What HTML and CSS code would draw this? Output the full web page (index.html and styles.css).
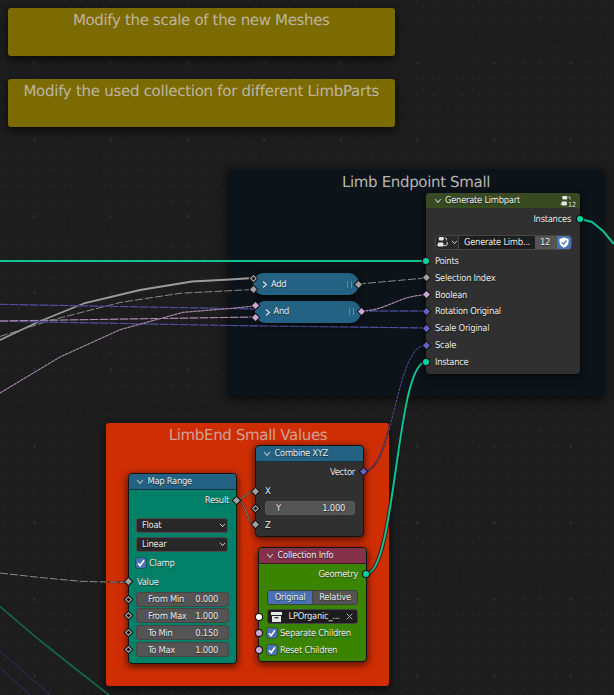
FILE: index.html
```html
<!DOCTYPE html>
<html lang="en">
<head>
<meta charset="utf-8">
<title>Geometry Nodes</title>
<link rel="stylesheet" href="styles.css">
</head>
<body>
<svg class="defs" width="0" height="0" aria-hidden="true">
  <defs>
    <symbol id="chev" viewBox="0 0 8 6"><path d="M1 1l3 3.4L7 1" fill="none" stroke="currentColor" stroke-width="1.1"/></symbol>
    <symbol id="check" viewBox="0 0 10 10"><path d="M2 5.2l2.1 2.4L8 2.3" fill="none" stroke="#fff" stroke-width="1.6"/></symbol>
    <symbol id="tree" viewBox="0 0 12 12">
      <rect x="1.8" y="1" width="5" height="3.4" rx=".8" fill="#e6e6e6"/>
      <rect x="1" y="6.6" width="5.4" height="4" rx=".8" fill="#e6e6e6"/>
      <path d="M0 9.2h1M8 1.8q1.6 0 1.6 1.6v1M6.4 9.6h2q1.8 0 1.8-1.8V6" fill="none" stroke="#e6e6e6"/>
    </symbol>
    <symbol id="tree-top" viewBox="0 0 12 12">
      <rect x="1.8" y="1" width="5" height="3.4" rx=".8" fill="#e6e6e6"/>
      <rect x="1" y="6.6" width="5.4" height="4" rx=".8" fill="#e6e6e6"/>
      <path d="M0 9.2h1M8 1.8q1.6 0 1.6 1.6v1" fill="none" stroke="#e6e6e6"/>
    </symbol>
  </defs>
</svg>
<main class="canvas">
  <section class="frame note-a"><h2>Modify the scale of the new Meshes</h2></section>
  <section class="frame note-b"><h2>Modify the used collection for different LimbParts</h2></section>
  <section class="frame endpoint"><h2>Limb Endpoint Small</h2></section>
  <section class="frame values"><h2>LimbEnd Small Values</h2></section>

  <svg class="links" width="614" height="695" viewBox="0 0 614 695" fill="none">
    <path class="violet-dim" d="M0 651L50 695M0 668L30 695"/>
    <path class="geo-dim" d="M0 606.5L38 639L72 666L109 695"/>
    <path class="geo" d="M0 261H426"/>
    <path class="geo" d="M580 219L592 222L603 231L614 244"/>
    <path class="grey-wide" d="M0 340L38 322L85 303L140 290L192 281.5L230 279.5L253 278"/>
    <path class="grey dash thin" d="M0 336.5L50 320.5L120 302.5L180 293.3L230 290.7L253 289.5"/>
    <path class="violet-under" d="M0 304.3L255 309L361 311H426M0 321.2L230 325.5L426 328"/>
    <path class="violet dash" d="M0 304.3L255 309L361 311H426M0 321.2L230 325.5L426 328"/>
    <path class="pink-under" d="M0 321L255 317"/>
    <path class="pink dash" d="M0 321L255 317"/>
    <path class="pink-under" d="M0 393L60 357L120 329.7L183 312.3L230 308.5L255 306"/>
    <path class="pink dots" d="M0 393L60 357L120 329.7L183 312.3L230 308.5L255 306"/>
    <path class="grey dash thin" d="M358 284L426 278"/>
    <path class="pink-under" d="M361 311C387 311 399 295 426 295"/>
    <path class="pink dots" d="M361 311C387 311 399 295 426 295"/>
    <path class="shade" d="M106 582L128 582.5M237 500C244 499 248 491 256 491M237 500C246 501 247 525 256 525"/>
    <path class="grey dash thin" d="M0 573L40 577.5L80 581.3L128 582.5"/>
    <path class="grey" d="M237 500C244 499 248 491 256 491M237 500C246 501 247 525 256 525"/>
    <path class="shade" d="M363 472C394 472 395 345 426 345"/>
    <path class="violet dots" d="M363 472C394 472 395 345 426 345"/>
    <path class="shade-wide" d="M366 574C396 574 396 362 426 362"/>
    <path class="geo" d="M366 574C396 574 396 362 426 362"/>
  </svg>

  <article class="node generate">
    <header><svg class="chev"><use href="#chev"/></svg><span>Generate Limbpart</span>
      <div class="users"><svg width="13" height="12"><use href="#tree-top"/></svg><small>12</small></div></header>
    <div class="row out"><span>Instances</span><i class="sock right geo-s"></i></div>
    <div class="picker">
      <div class="pick-icon"><svg width="12" height="12"><use href="#tree"/></svg><svg class="mini"><use href="#chev"/></svg></div>
      <div class="pick-name"><span>Generate Limb...</span></div>
      <div class="pick-count"><span>12</span></div>
      <div class="pick-shield"><svg width="10" height="11" viewBox="0 0 10 11"><path d="M5 .4L9.6 2v3Q9.2 9 5 10.8Q.8 9 .4 5V2z" fill="#fff"/><path d="M2.7 5.3l1.8 1.9L7.5 3.5" fill="none" stroke="#4772b3" stroke-width="1.2"/></svg></div>
    </div>
    <div class="row"><i class="sock geo-s"></i><span>Points</span></div>
    <div class="row"><i class="sock dia grey-s"></i><span>Selection Index</span></div>
    <div class="row"><i class="sock dia pink-s"></i><span>Boolean</span></div>
    <div class="row"><i class="sock dia violet-s"></i><span>Rotation Original</span></div>
    <div class="row"><i class="sock dia violet-s"></i><span>Scale Original</span></div>
    <div class="row"><i class="sock dia violet-s"></i><span>Scale</span></div>
    <div class="row"><i class="sock geo-s"></i><span>Instance</span></div>
  </article>

  <article class="pill add">
    <i class="sock dia grey-s open s1"></i><i class="sock dia grey-s s2"></i>
    <svg class="chev side"><use href="#chev"/></svg><span>Add</span><b class="grip"></b>
    <i class="sock dia grey-s end"></i>
  </article>
  <article class="pill and">
    <i class="sock dia pink-s s1"></i><i class="sock dia pink-s s2"></i>
    <svg class="chev side"><use href="#chev"/></svg><span>And</span><b class="grip"></b>
    <i class="sock dia pink-s end"></i>
  </article>

  <article class="node map">
    <header><svg class="chev"><use href="#chev"/></svg><span>Map Range</span></header>
    <div class="row out"><span>Result</span><i class="sock dia right grey-s"></i></div>
    <div class="menus">
      <div class="select"><span>Float</span><svg class="mini"><use href="#chev"/></svg></div>
      <div class="select"><span>Linear</span><svg class="mini"><use href="#chev"/></svg></div>
    </div>
    <div class="row check"><svg class="box"><use href="#check"/></svg><span>Clamp</span></div>
    <div class="row value"><i class="sock dia grey-s"></i><span>Value</span></div>
    <div class="row"><i class="sock dia grey-s open"></i><div class="num"><span>From Min</span><span>0.000</span></div></div>
    <div class="row"><i class="sock dia grey-s open"></i><div class="num"><span>From Max</span><span>1.000</span></div></div>
    <div class="row"><i class="sock dia grey-s open"></i><div class="num"><span>To Min</span><span>0.150</span></div></div>
    <div class="row"><i class="sock dia grey-s open"></i><div class="num"><span>To Max</span><span>1.000</span></div></div>
  </article>

  <article class="node combine">
    <header><svg class="chev"><use href="#chev"/></svg><span>Combine XYZ</span></header>
    <div class="row out"><span>Vector</span><i class="sock dia right violet-s"></i></div>
    <div class="row"><i class="sock dia grey-s"></i><span>X</span></div>
    <div class="row"><i class="sock dia grey-s open"></i><div class="num"><span>Y</span><span>1.000</span></div></div>
    <div class="row"><i class="sock dia grey-s"></i><span>Z</span></div>
  </article>

  <article class="node collection">
    <header><svg class="chev"><use href="#chev"/></svg><span>Collection Info</span></header>
    <div class="row out"><span>Geometry</span><i class="sock right geo-s"></i></div>
    <div class="tabs"><div class="on"><span>Original</span></div><div><span>Relative</span></div></div>
    <div class="row"><i class="sock white-s"></i>
      <div class="data"><svg width="11" height="10" viewBox="0 0 11 10"><path d="M0 0h11v3H0zM1 4h9v6H1z" fill="#e8e8e8"/><path d="M3.5 5.7h4" stroke="#1d1d1d" stroke-width="1.2"/></svg><span>LPOrganic_...</span><svg width="7" height="7" viewBox="0 0 7 7"><path d="M.7.7l5.6 5.6M6.3.7L.7 6.3" stroke="#aaa"/></svg></div></div>
    <div class="row check"><i class="sock pink-s"></i><svg class="box"><use href="#check"/></svg><span>Separate Children</span></div>
    <div class="row check"><i class="sock pink-s"></i><svg class="box"><use href="#check"/></svg><span>Reset Children</span></div>
  </article>
</main>
</body>
</html>
```
FILE: styles.css
```css
* { box-sizing: border-box; }
body {
  margin: 0;
  background: #1d1d1d;
  font: 9.3px/17px "DejaVu Sans Condensed", "DejaVu Sans", sans-serif;
  letter-spacing: -0.26px;
  color: #ececec;
  text-rendering: geometricPrecision;
}
.defs { position: absolute; }
.canvas {
  position: relative;
  width: 614px;
  height: 695px;
  overflow: hidden;
  background-image: radial-gradient(circle at 1px 1px, #262626 1px, transparent 1.3px);
  background-size: 15.32px 15.32px;
  background-position: 3px 1px;
}
.canvas::before {
  content: "";
  position: absolute;
  inset: 0;
  background: conic-gradient(from 270deg at 3px 3px, #2a2a2a 90deg, transparent 0) 33px -15px / 76.62px 76.62px;
}

/* frames */
.frame {
  position: absolute;
  border-radius: 3px;
  text-align: center;
  box-shadow: 0 3px 8px 1px rgba(0, 0, 0, .6);
}
.frame h2 {
  margin: 0;
  font: 15px/18px "DejaVu Sans", sans-serif;
  letter-spacing: -0.34px;
  color: #b9b6b0;
}
.note-a, .note-b { left: 8px; width: 386.5px; height: 48px; padding-top: 3px; background: #7c6a02; }
.note-a { top: 8px; }
.note-b { top: 79px; }
.note-b h2 { letter-spacing: -0.28px; }
.endpoint { left: 228px; top: 169px; width: 376px; height: 227px; padding-top: 4px; background: #0c1319; }
.values { left: 106px; top: 423px; width: 283px; height: 262.5px; padding: 3px 0 0 1px; background: #cf2e05; }
.note-a h2, .note-b h2 { color: #bcb6a0; }
.values h2 { color: #d0a294; }

/* links */
.links { position: absolute; left: 0; top: 0; }
.geo { stroke: #0fc294; stroke-width: 2; }
.geo-dim { stroke: #12694f; stroke-width: 1.6; }
.grey-wide { stroke: #9c9c9c; stroke-width: 1.8; }
.grey { stroke: #969696; stroke-width: 1; }
.thin { stroke: #8a8a8a; }
.violet { stroke: #5252a6; stroke-width: 1; }
.violet-under { stroke: #33335e; stroke-width: 1.2; }
.violet-dim { stroke: #2d2a4b; stroke-width: 1.2; }
.pink { stroke: #b08fb5; stroke-width: 1; }
.pink-under { stroke: #594a5d; stroke-width: 1.2; }
.shade { stroke: rgba(20, 20, 30, .6); stroke-width: 2; }
.shade-wide { stroke: rgba(10, 20, 20, .7); stroke-width: 4; }
.dash { stroke-dasharray: 8 2; }
.dots { stroke-dasharray: 3 1; }

/* nodes */
.node {
  position: absolute;
  border-radius: 4px;
  background: #303030;
  box-shadow: 0 2px 7px 1px rgba(0, 0, 0, .6);
  text-shadow: 0 1px 1px rgba(0, 0, 0, .6);
}
.node span, .pill span { padding-top: .8px; }
.node header {
  display: flex;
  align-items: center;
  height: 15px;
  padding-left: 7px;
  gap: 3.5px;
  border-radius: 4px 4px 0 0;
  background: #246283;
}
.node header span { padding-top: 0; }
.chev { width: 8px; height: 6px; color: #b9c2c4; }
.row { position: relative; display: flex; align-items: center; height: 16.85px; padding: 0 9px; white-space: nowrap; }
.out { justify-content: flex-end; }
.generate { left: 426px; top: 193px; width: 154px; height: 181px; }
.generate header { background: #374a22; margin-bottom: 2.5px; padding-left: 7.5px; }
.users { display: flex; align-items: flex-end; margin: 1px 4px 0 auto; }
.users small { font-size: 7px; line-height: 6px; letter-spacing: 0; margin: 0 0 -1px -5.5px; }
.picker { display: flex; height: 15px; margin: 7.4px 8px 2.8px 9px; border: 1px solid #454545; border-radius: 3px; background: #1d1d1d; line-height: 13px; overflow: hidden; white-space: nowrap; }
.picker > div { display: flex; align-items: center; justify-content: center; gap: 2px; }
.pick-icon { width: 23px; background: #292929; border-right: 1px solid #454545; }
.pick-name { flex: 1; }
.picker .pick-count { width: 22px; background: #545454; padding-right: 2px; }
.pick-shield { width: 14px; background: #4772b3; }

.map, .combine, .collection { border: 1px solid #141414; }
.map { left: 128px; top: 473px; width: 109px; height: 191px; background: #028068; }
.map header, .combine header, .collection header { border-bottom: 1px solid rgba(0, 0, 0, .5); }
.map header { height: 16px; margin-bottom: 2px; }
.map .row { padding: 0 7px; }
.map .check { margin-top: 3px; }
.map .value { height: 18px; padding-left: 8px; margin-top: 1px; }
.menus { display: flex; flex-direction: column; gap: 4px; margin: 9px 8px 0 7px; }
.select { display: flex; align-items: center; justify-content: space-between; height: 15px; padding: 0 1px 0 5px; border: 1px solid #4a4a4a; border-radius: 3px; background: #282828; }
.mini { width: 7px; height: 5px; color: #ddd; }
.check { gap: 3px; }
.box { width: 10px; height: 10px; flex: none; border-radius: 2px; background: #4772b3; outline: 1px solid rgba(40, 50, 60, .5); }
.num { display: flex; flex: 1; align-items: center; justify-content: space-between; height: 15px; padding: 0 10px 0 11px; border: 1px solid #454545; border-radius: 3px; background: #545454; }

.combine { left: 255px; top: 445px; width: 109px; height: 92px; }
.combine header, .collection header { height: 16px; margin-bottom: 1.5px; }
.combine .out { margin: 1.5px 0 2.4px; }
.combine .num { height: 14px; padding: 0 9px 0 10px; border-color: #5a5a5a; }
.combine .row { padding: 0 8px 0 9px; }

.collection { left: 258px; top: 547px; width: 109px; height: 115px; background: #3b8400; }
.collection header { background: #84304b; }
.collection .row { padding: 0 8px; height: 16.7px; }
.tabs { display: flex; height: 15px; margin: 7.5px 8px 3.5px; border: 1px solid #3d4238; border-radius: 3px; overflow: hidden; line-height: 13px; background: #545454; }
.tabs div { display: flex; flex: 1; align-items: center; justify-content: center; }
.tabs .on { background: #4772b3; border-right: 1px solid #444; }
.data { display: flex; flex: 1; align-items: center; justify-content: space-between; height: 15px; padding: 0 4px 0 3px; border: 1px solid #454545; border-radius: 3px; background: #1d1d1d; }

/* collapsed nodes */
.pill { position: absolute; width: 106px; height: 22px; display: flex; align-items: center; gap: 2px; padding: 0 7px 0 8.5px; border-radius: 11px; background: #246283; box-shadow: 0 2px 6px rgba(0, 0, 0, .6); text-shadow: 0 1px 1px rgba(0, 0, 0, .6); }
.add { left: 252.5px; top: 273px; }
.and { left: 255px; top: 300.5px; }
.side { transform: translateY(.5px) rotate(-90deg); color: #e2e2e2; }
.pill span { padding-top: 0; }
.grip { width: 5px; height: 7px; margin-left: auto; border: solid #5f8aa2; border-width: 0 1.5px; }

/* sockets */
.sock { position: absolute; left: -3px; top: 50%; width: 6px; height: 6px; margin-top: -3px; border-radius: 50%; box-shadow: 0 0 0 1px #111; }
.dia { width: 5px; height: 5px; left: -2.5px; margin-top: -2.5px; border-radius: 0; transform: rotate(45deg); }
.right { left: auto; right: -3px; }
.geo-s { background: #00d6a3; }
.grey-s { background: #a1a1a1; }
.pink-s { background: #cca6d6; }
.violet-s { background: #6363c7; }
.white-s { background: #fff; }
.open { background: #141414; border: 1.3px solid #b5b5b5; }
.map .sock:not(.right), .combine .sock:not(.right) { left: -3px; }
.collection .sock:not(.right) { left: -3.5px; }
.s1 { top: 5px; left: -2px; }
.s2 { top: 16.5px; left: -2px; }
.end { left: auto; right: -2.5px; top: 11px; }
```
